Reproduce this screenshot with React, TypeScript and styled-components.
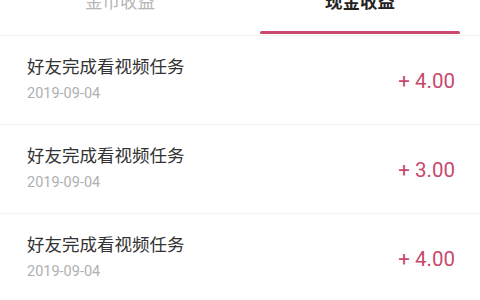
import styled, { createGlobalStyle } from 'styled-components';

const GlobalStyle = createGlobalStyle`
  html, body {
    margin: 0;
    padding: 0;
    background: #ffffff;
    overflow: hidden;
  }
  body {
    font-family: Roboto, "Noto Sans CJK SC", sans-serif;
  }
`;

const Page = styled.div`
  width: 480px;
  height: 300px;
  overflow: hidden;
  background: #ffffff;
`;

const TabBar = styled.div`
  display: flex;
  height: 45px;
  margin-top: -10px;
  border-bottom: 1px solid #f1f1f1;
`;

const Tab = styled.div<{ active?: boolean }>`
  flex: 1;
  display: flex;
  flex-direction: column;
  align-items: center;
  justify-content: space-between;
  padding: 0 20px;
  font-size: 17.5px;
  line-height: 24px;
  font-weight: ${(p) => (p.active ? 700 : 400)};
  color: ${(p) => (p.active ? '#222222' : '#b5b5b5')};
`;

const Underline = styled.div<{ active?: boolean }>`
  align-self: stretch;
  height: 3px;
  margin-bottom: 1px;
  border-radius: 2px;
  background: ${(p) => (p.active ? '#c8496c' : 'transparent')};
`;

const Row = styled.div`
  display: flex;
  align-items: center;
  justify-content: space-between;
  height: 88px;
  padding: 0 25px 0 27px;
  border-bottom: 1px solid #f3f3f3;
`;

const Info = styled.div`
  display: flex;
  flex-direction: column;
  gap: 7px;
  margin-top: -2px;
`;

const Title = styled.div`
  font-size: 17.5px;
  line-height: 22px;
  color: #333333;
`;

const DateText = styled.div`
  font-size: 14.5px;
  line-height: 18px;
  color: #b0b0b0;
`;

const Amount = styled.div`
  font-size: 20.5px;
  color: #c8496c;
  margin-top: 2px;
`;

const records = [
  { title: '好友完成看视频任务', date: '2019-09-04', amount: '+ 4.00' },
  { title: '好友完成看视频任务', date: '2019-09-04', amount: '+ 3.00' },
  { title: '好友完成看视频任务', date: '2019-09-04', amount: '+ 4.00' },
];

const App = () => (
  <Page>
    <GlobalStyle />
    <TabBar>
      <Tab>
        金币收益
        <Underline />
      </Tab>
      <Tab active>
        现金收益
        <Underline active />
      </Tab>
    </TabBar>
    {records.map((r, i) => (
      <Row key={i}>
        <Info>
          <Title>{r.title}</Title>
          <DateText>{r.date}</DateText>
        </Info>
        <Amount>{r.amount}</Amount>
      </Row>
    ))}
  </Page>
);

export default App;
